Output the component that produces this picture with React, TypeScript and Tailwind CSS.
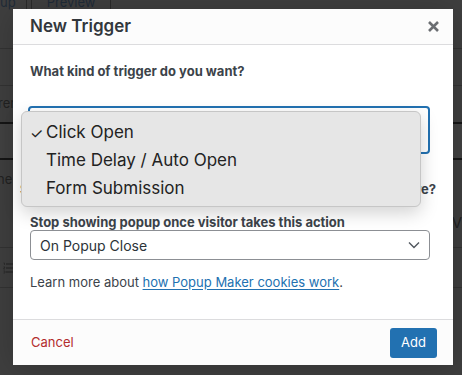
import React from 'react';

const menuItems = [
    { label: 'Click Open', checked: true },
    { label: 'Time Delay / Auto Open', checked: false },
    { label: 'Form Submission', checked: false },
];

const Backdrop: React.FC = () => {
    return (
        <div className="flex flex-col h-full text-[#222] text-[13px]">
            <div className="h-[49px] border-b border-[#333] flex items-start gap-0">
                <div className="flex h-[9px] items-end leading-none text-[13px] text-[#1f2b38]">
                    <span className="-mt-[6px] pr-[10px] border-r border-[#2a2a2a]">up</span>
                    <span className="ml-[4px] border-l border-r border-[#2a2a2a] px-[15px]">Preview</span>
                </div>
            </div>
            <div className="h-[37px] border-b border-[#333]" />
            <div className="h-[38px] border-b-2 border-[#161616] flex items-center text-[13px] -ml-[2px]">rer</div>
            <div className="h-[36px] border-b-2 border-[#161616] bg-[#424242]" />
            <div className="h-[88px] border-b border-[#333] flex justify-between">
                <span className="mt-[10px] -ml-[3px]">he</span>
                <span className="mt-[52px] text-[15px] text-[#222]">V</span>
            </div>
            <div className="h-[40px] border-b border-[#333] flex items-center pl-[3px]">
                <svg width="10" height="12" viewBox="0 0 10 12" fill="none" stroke="#222" strokeWidth="1">
                    <path d="M3 2h7M3 6h7M3 10h7" />
                    <path d="M0.5 1h1v2M0.5 5h1.5l-1.5 2h1.5M0.5 9h1.5v2h-1.5" strokeWidth="0.6" />
                </svg>
            </div>
            <div className="flex-1" />
        </div>
    );
};

const App: React.FC = () => {
    return (
        <div className="relative w-[462px] h-[375px] overflow-hidden bg-[#3f3f3f] font-['Inter',sans-serif]">
            <Backdrop />

            <div className="absolute left-[13px] top-[9px] w-[440px] h-[356px] bg-white flex flex-col shadow-[0_3px_30px_rgba(0,0,0,0.2)]">
                {/* header */}
                <div className="relative h-[36px] shrink-0 bg-[#fcfcfc] border-b border-[#dcdcde] pl-[17px] flex items-center">
                    <h1 className="text-[17px] font-semibold text-[#32373c] leading-none">New Trigger</h1>
                    <button className="absolute right-[13px] top-[11px] text-[#787c82]">
                        <svg width="13" height="13" viewBox="0 0 13 13">
                            <path d="M2 2l9 9M11 2l-9 9" stroke="#6b6e72" strokeWidth="2.6" strokeLinecap="butt" />
                        </svg>
                    </button>
                </div>

                {/* body */}
                <div className="flex-1 px-[17px] pt-[17px] text-[#3c434a]">
                    <p className="text-[13px] font-bold leading-[18px] text-[#3c434a]">What kind of trigger do you want?</p>
                    <div className="mt-[26px] -ml-[2px] w-[402px] h-[48px] border-2 border-[#2271b1] rounded-[4px]" />
                    <div className="mt-[27px] flex justify-end">
                        <p className="text-[13px] font-bold leading-[16px] whitespace-nowrap">
                            Should this popup stop showing to visitors who've seen it before?
                        </p>
                    </div>
                    <p className="mt-[17px] text-[13px] font-bold leading-[16px]">Stop showing popup once visitor takes this action</p>
                    <div className="w-[400px] h-[30px] border border-[#8c8f94] rounded-[4px] flex items-center justify-between pl-[9px] pr-[9px] text-[14px] text-[#2c3338]">
                        <span>On Popup Close</span>
                        <svg width="12" height="8" viewBox="0 0 12 8" fill="none">
                            <path d="M1 1.5l5 5 5-5" stroke="#50575e" strokeWidth="1.4" />
                        </svg>
                    </div>
                    <p className="mt-[13px] text-[13px] leading-[18px] text-[#3c434a]">
                        Learn more about{' '}
                        <a href="#" className="text-[#2271b1] underline underline-offset-2">how Popup Maker cookies work</a>.
                    </p>
                </div>

                {/* footer */}
                <div className="h-[46px] shrink-0 border-t border-[#dcdcde] bg-[#fcfcfc] flex items-center justify-between pl-[18px] pr-[16px]">
                    <a href="#" className="text-[13px] text-[#b32d2e]">Cancel</a>
                    <button className="h-[30px] px-[11px] rounded-[3px] bg-[#2271b1] text-white text-[13px]">Add</button>
                </div>

                {/* native select popup */}
                <div className="absolute left-[8px] top-[102px] w-[400px] h-[96px] rounded-[6px] bg-[#e6e6e6] border border-[#c6c6c6] shadow-[0_6px_18px_rgba(0,0,0,0.18)] pt-[7px]">
                    {menuItems.map((item) => (
                        <div key={item.label} className="h-[28px] flex items-center text-[17px] text-[#222]">
                            <span className="w-[24px] pl-[8px] text-[15px] leading-none">{item.checked ? '✓' : ''}</span>
                            <span>{item.label}</span>
                        </div>
                    ))}
                </div>
            </div>
        </div>
    );
};

export default App;
